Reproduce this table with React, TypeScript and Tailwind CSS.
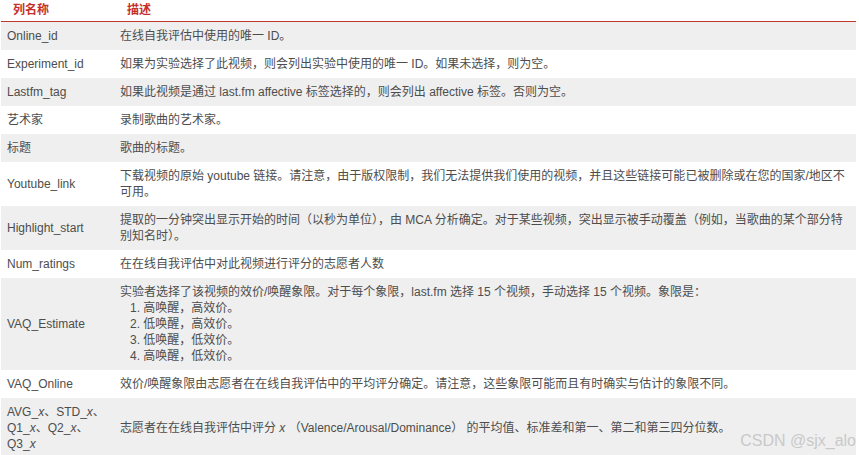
import React from 'react';

type Row = { name: React.ReactNode; desc: React.ReactNode };

const X: React.FC = () => <i>x</i>;

const rows: Row[] = [
  { name: 'Online_id', desc: '在线自我评估中使用的唯一 ID。' },
  { name: 'Experiment_id', desc: '如果为实验选择了此视频，则会列出实验中使用的唯一 ID。如果未选择，则为空。' },
  { name: 'Lastfm_tag', desc: '如果此视频是通过 last.fm affective 标签选择的，则会列出 affective 标签。否则为空。' },
  { name: '艺术家', desc: '录制歌曲的艺术家。' },
  { name: '标题', desc: '歌曲的标题。' },
  {
    name: 'Youtube_link',
    desc: (
      <>
        下载视频的原始 youtube 链接。请注意，由于版权限制，我们无法提供我们使用的视频，并且这些链接可能已被删除或在您的国家/地区不
        <br />
        可用。
      </>
    ),
  },
  {
    name: 'Highlight_start',
    desc: (
      <>
        提取的一分钟突出显示开始的时间（以秒为单位），由 MCA 分析确定。对于某些视频，突出显示被手动覆盖（例如，当歌曲的某个部分特
        <br />
        别知名时）。
      </>
    ),
  },
  { name: 'Num_ratings', desc: '在在线自我评估中对此视频进行评分的志愿者人数' },
  {
    name: 'VAQ_Estimate',
    desc: (
      <>
        <div>实验者选择了该视频的效价/唤醒象限。对于每个象限，last.fm 选择 15 个视频，手动选择 15 个视频。象限是：</div>
        <div className="pl-[10px]">1. 高唤醒，高效价。</div>
        <div className="pl-[10px]">2. 低唤醒，高效价。</div>
        <div className="pl-[10px]">3. 低唤醒，低效价。</div>
        <div className="pl-[10px]">4. 高唤醒，低效价。</div>
      </>
    ),
  },
  { name: 'VAQ_Online', desc: '效价/唤醒象限由志愿者在在线自我评估中的平均评分确定。请注意，这些象限可能而且有时确实与估计的象限不同。' },
  {
    name: (
      <>
        AVG_<X />、STD_<X />、
        <br />
        Q1_<X />、Q2_<X />、
        <br />
        Q3_<X />
      </>
    ),
    desc: (
      <>
        志愿者在在线自我评估中评分 <X /> （Valence/Arousal/Dominance） 的平均值、标准差和第一、第二和第三四分位数。
      </>
    ),
  },
];

export default function App() {
  return (
    <div
      className="relative w-[859px] h-[455px] overflow-hidden bg-white text-[12px] leading-4 text-[#4d4d4d]"
      style={{ fontFamily: '"Liberation Sans", "Noto Sans CJK SC", sans-serif' }}
    >
      <table className="ml-px w-[855px] border-collapse table-fixed">
        <colgroup>
          <col className="w-[113px]" />
          <col />
        </colgroup>
        <thead>
          <tr className="h-[21px] border-b border-[#c0392b]">
            <th className="pl-3 text-left align-middle font-bold text-[#c7302a]">列名称</th>
            <th className="pl-[13px] text-left align-middle font-bold text-[#c7302a]">描述</th>
          </tr>
        </thead>
        <tbody>
          {rows.map((r, i) => (
            <tr key={i} className={i % 2 === 0 ? 'bg-[#efefef]' : 'bg-white'}>
              <td className="px-[6px] py-[6px] align-middle whitespace-nowrap">{r.name}</td>
              <td className="px-[6px] py-[6px] align-middle whitespace-nowrap">{r.desc}</td>
            </tr>
          ))}
        </tbody>
      </table>
      <div
        className="absolute right-[3px] top-[431px] text-[16px] leading-5 text-[#c9c9c9]"
        style={{ fontFamily: '"Liberation Sans", sans-serif' }}
      >
        CSDN @sjx_alo
      </div>
    </div>
  );
}
